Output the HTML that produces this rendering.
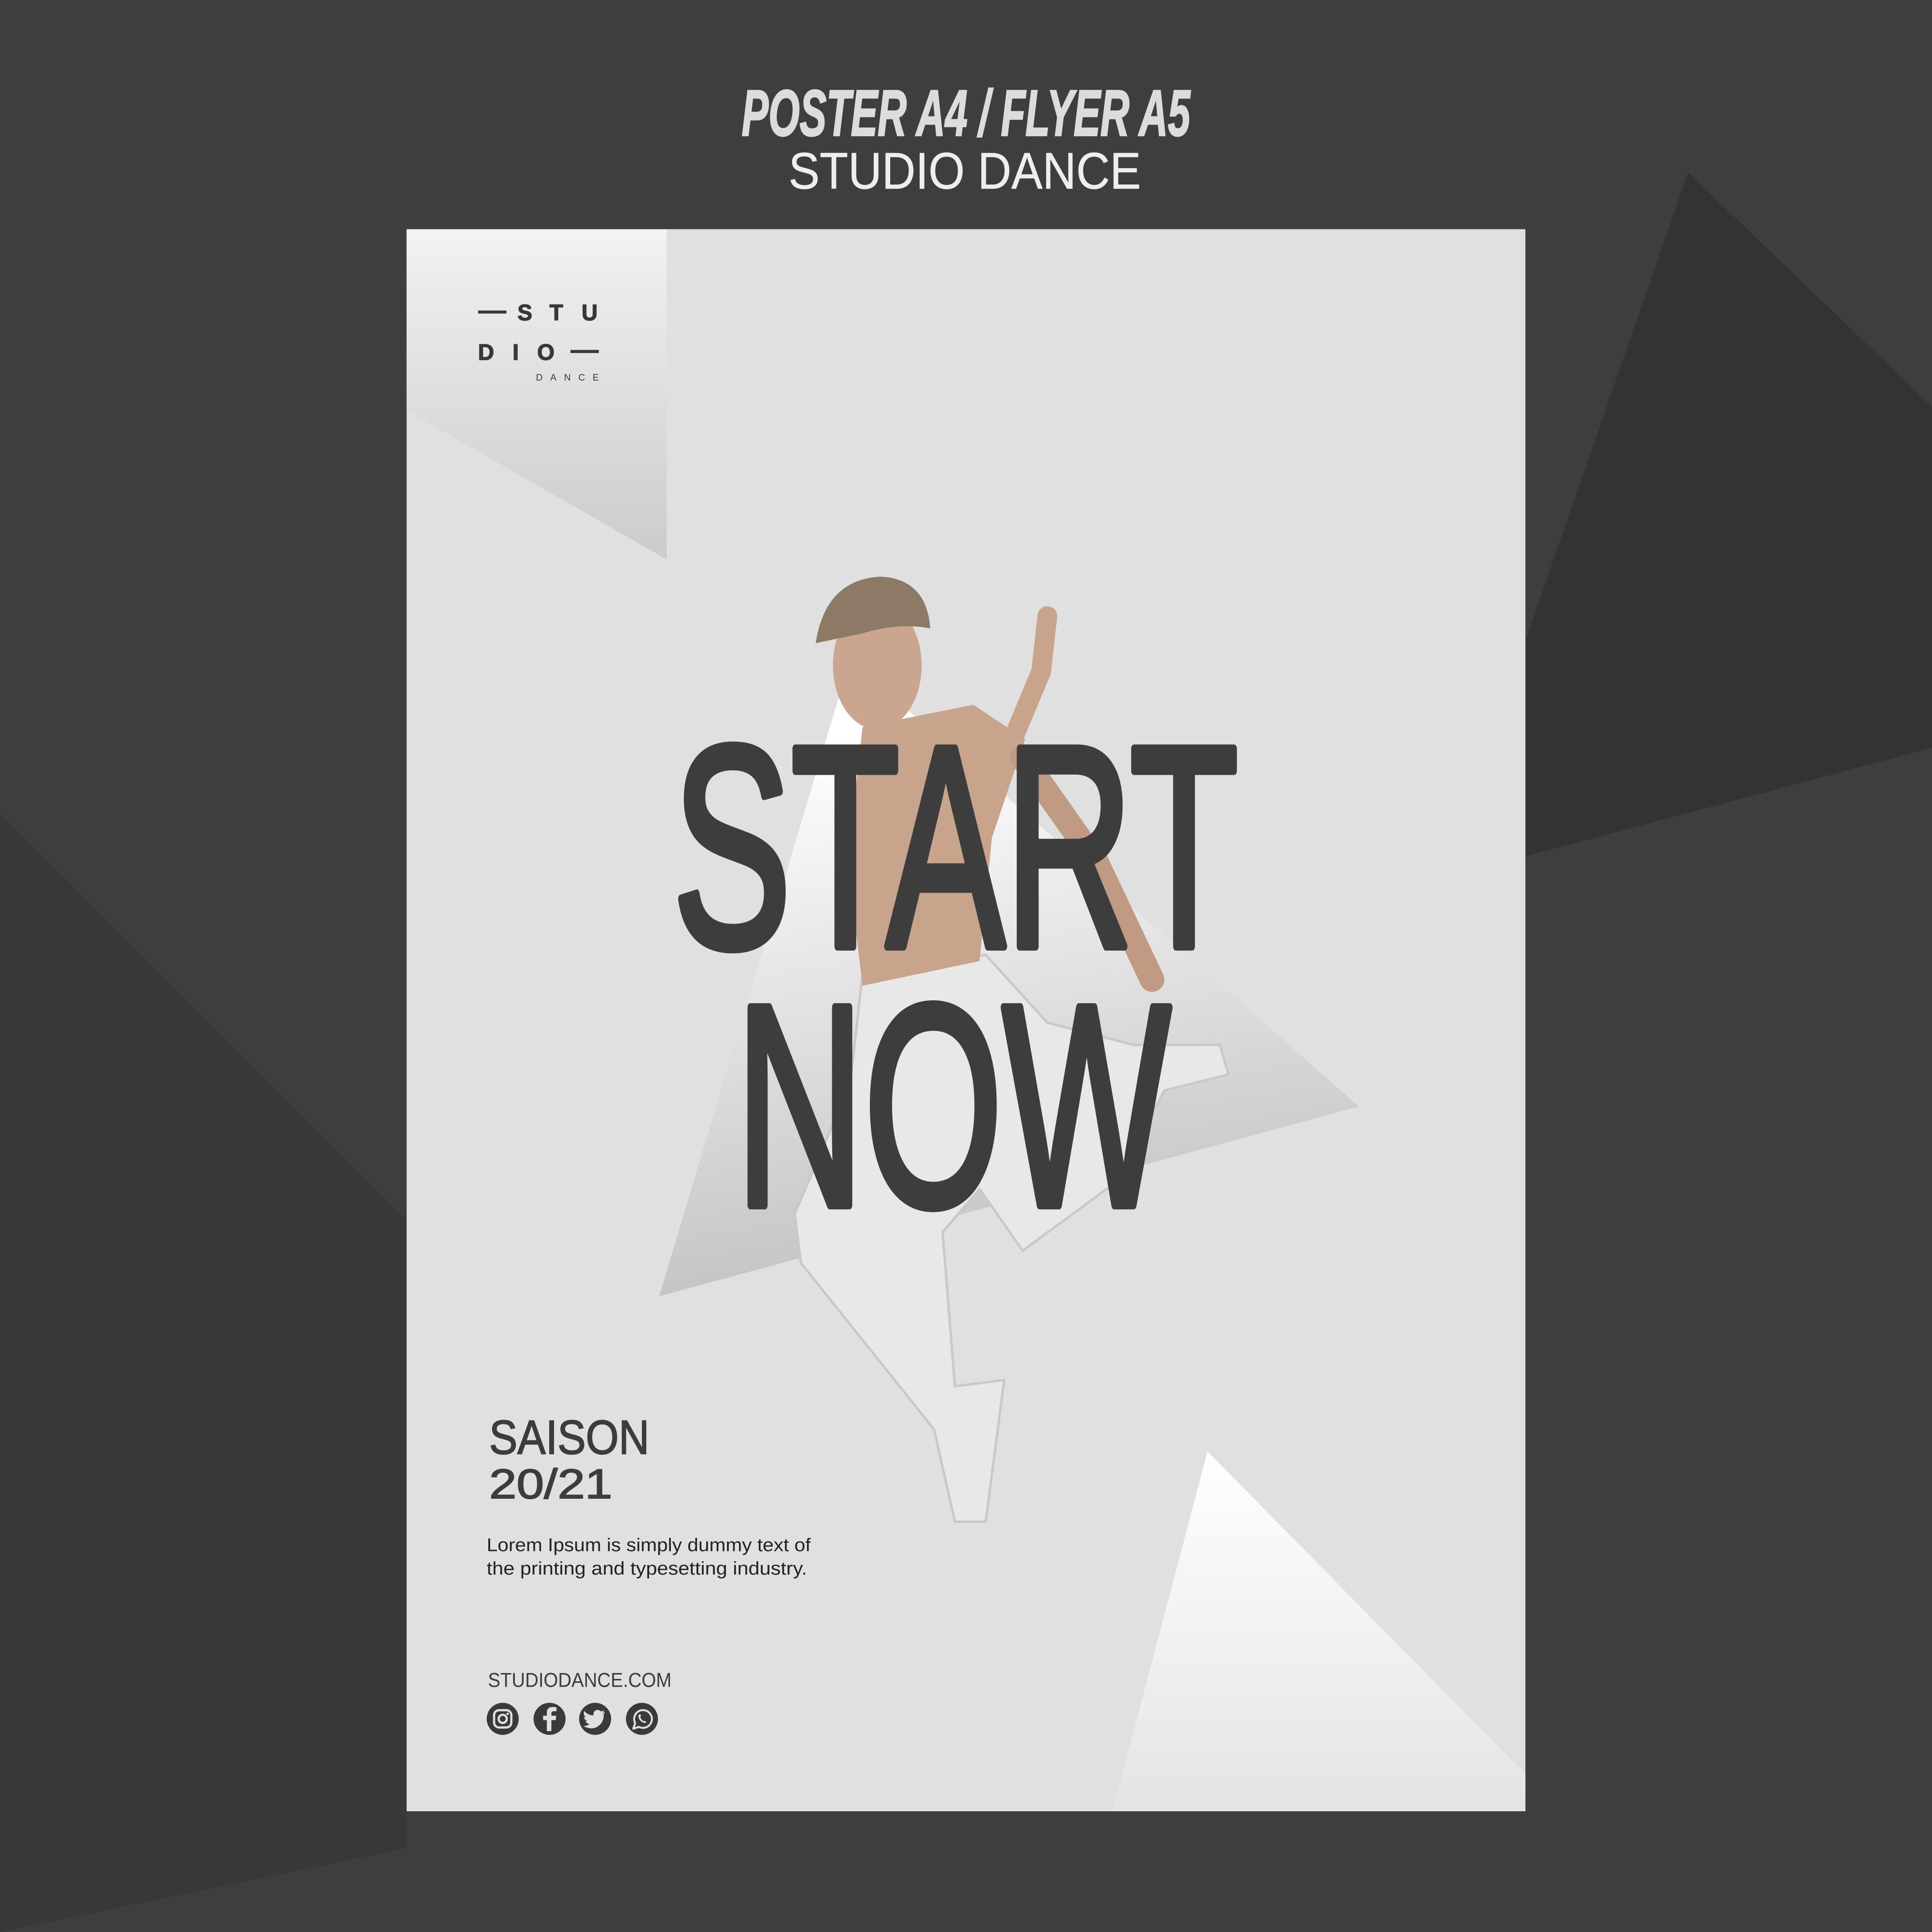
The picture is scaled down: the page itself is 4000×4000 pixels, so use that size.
<!DOCTYPE html>
<html><head><meta charset="utf-8"><style>
html,body{margin:0;padding:0;background:#3e3e3e;}
svg{display:block;}
</style></head><body>
<svg xmlns="http://www.w3.org/2000/svg" width="4000" height="4000" viewBox="0 0 1568 1568">
<defs>
<linearGradient id="gp" x1="0" y1="0" x2="0" y2="1"><stop offset="0" stop-color="#f2f2f2"/><stop offset="1" stop-color="#cbcbcd"/></linearGradient>
<linearGradient id="gc" x1="660" y1="600" x2="720" y2="1020" gradientUnits="userSpaceOnUse"><stop offset="0" stop-color="#ffffff"/><stop offset="1" stop-color="#c6c6c8"/></linearGradient>
<linearGradient id="gb" x1="0" y1="0" x2="0" y2="1"><stop offset="0" stop-color="#ffffff"/><stop offset="1" stop-color="#e4e4e4"/></linearGradient>
</defs>
<rect width="1568" height="1568" fill="#3e3e3e"/>
<polygon points="1238,695 1568,607 1568,330 1370,140 1238,520" fill="#333333"/>
<polygon points="0,660 330,990 330,1500 0,1568" fill="#383838"/>

<g font-family="'Liberation Sans Narrow','Liberation Sans',sans-serif" font-weight="bold" font-style="italic" font-size="53" fill="#dcdcdc" stroke="#dcdcdc" stroke-width="1.2">
<text x="602" y="110" textLength="364" lengthAdjust="spacingAndGlyphs">POSTER A4 / FLYER A5</text>
</g>
<text x="640" y="153" font-family="'Liberation Sans',sans-serif" font-size="42" fill="#eeeeee" stroke="#eeeeee" stroke-width="0.3" textLength="286" lengthAdjust="spacingAndGlyphs">STUDIO DANCE</text>

<rect x="330" y="186" width="908" height="1284" fill="#e0e0e0"/>
<polygon points="330,186 541,186 541,454 330,333" fill="url(#gp)"/>
<polygon points="690,535 1103,898 535,1052" fill="url(#gc)"/>
<polygon points="980,1178 1238,1440 1238,1470 903,1470" fill="url(#gb)"/>

<g fill="#383838" stroke="#383838" stroke-width="0.6" font-family="'Liberation Sans',sans-serif" font-weight="bold" font-size="18">
<rect x="388" y="252" width="23" height="2.5" stroke="none"/>
<text x="420" y="260">S</text><text x="446" y="260">T</text><text x="472" y="260">U</text>
<text x="388" y="292">D</text><text x="416" y="292">I</text><text x="436" y="292">O</text>
<rect x="463" y="284" width="23" height="2.5" stroke="none"/>
</g>
<text x="435" y="309" font-family="'Liberation Sans',sans-serif" font-size="7.5" fill="#383838" textLength="51" lengthAdjust="spacing">DANCE</text>

<!-- dancer (approximation) -->
<g>
<path d="M700,790 L800,775 L850,830 L920,848 L990,848 L997,872 L945,885 L905,960 L830,1015 L795,965 L765,1000 L775,1125 L815,1120 L800,1235 L775,1235 L758,1160 L650,1025 L645,985 L690,880 Z" fill="#e8e8e8" stroke="#c9c9c9" stroke-width="2"/>
<path d="M700,590 L790,572 L832,600 L805,680 L795,780 L700,800 L688,700 Z" fill="#c9a48c"/>
<path d="M822,600 L845,545 L850,500" stroke="#c9a48c" stroke-width="16" fill="none" stroke-linecap="round"/>
<path d="M830,615 L890,700 L935,795" stroke="#c09a82" stroke-width="20" fill="none" stroke-linecap="round"/>
<ellipse cx="712" cy="540" rx="36" ry="52" fill="#caa58f"/>
<path d="M662,522 Q670,470 715,468 Q752,470 755,510 Q730,505 700,514 Z" fill="#8c7a66"/>
</g>

<g font-family="'Liberation Sans Narrow','Liberation Sans',sans-serif" font-size="233" fill="#3d3d3d" stroke="#3d3d3d" stroke-width="7" stroke-linejoin="round">
<text x="546" y="768" textLength="459" lengthAdjust="spacingAndGlyphs">START</text>
<text x="597" y="978" textLength="353" lengthAdjust="spacingAndGlyphs">NOW</text>
</g>

<g fill="#3c3c3c" font-family="'Liberation Sans',sans-serif">
<text x="397" y="1180" font-size="39" stroke="#3c3c3c" stroke-width="0.8" textLength="130" lengthAdjust="spacingAndGlyphs">SAISON</text>
<text x="397" y="1216" font-size="34" stroke="#3c3c3c" stroke-width="0.8" textLength="100" lengthAdjust="spacingAndGlyphs">20/21</text>
<text x="395" y="1259" font-size="15" fill="#222" textLength="263" lengthAdjust="spacingAndGlyphs">Lorem Ipsum is simply dummy text of</text>
<text x="395" y="1278" font-size="15" fill="#222" textLength="260" lengthAdjust="spacingAndGlyphs">the printing and typesetting industry.</text>
<text x="396" y="1369" font-size="16.5" textLength="149" lengthAdjust="spacingAndGlyphs">STUDIODANCE.COM</text>
</g>

<g>
<circle cx="408" cy="1395" r="13" fill="#3a3a3a"/>
<rect x="401" y="1388" width="14" height="14" rx="4" fill="none" stroke="#e0e0e0" stroke-width="1.8"/>
<circle cx="408" cy="1395" r="3.3" fill="none" stroke="#e0e0e0" stroke-width="1.8"/>
<circle cx="412" cy="1391" r="1" fill="#e0e0e0"/>
<circle cx="446" cy="1395" r="13" fill="#3a3a3a"/>
<path d="M447.5,1405 V1396 H451 L451.5,1392.5 H447.5 V1390.5 Q447.5,1388.8 449.5,1388.8 H451.6 V1385.6 Q450,1385.4 448.6,1385.4 Q443.8,1385.4 443.8,1390 V1392.5 H440.8 V1396 H443.8 V1405 Z" fill="#e0e0e0"/>
<circle cx="483" cy="1395" r="13" fill="#3a3a3a"/>
<path d="M491,1389.5 Q489.8,1390 488.6,1390.2 Q489.9,1389.4 490.3,1388 Q489.1,1388.7 487.8,1389 Q486.6,1387.8 485,1387.8 Q481.8,1387.9 481.6,1391.4 Q481.6,1391.9 481.7,1392.3 Q477,1392 474.2,1388.6 Q472.9,1391.7 475.6,1393.6 Q474.7,1393.6 474,1393.2 Q474.1,1396 476.8,1396.7 Q476,1396.9 475.2,1396.8 Q476,1399 478.4,1399.2 Q476.2,1401 473.3,1400.8 Q482,1405.4 487.6,1399 Q490.3,1395.7 489.9,1391.2 Q490.6,1390.5 491,1389.5 Z" fill="#e0e0e0"/>
<circle cx="521" cy="1395" r="13" fill="#3a3a3a"/>
<path d="M514,1403 L515.5,1398.5 A7.2,7.2 0 1 1 518.5,1401.5 Z" fill="none" stroke="#e0e0e0" stroke-width="1.6" stroke-linejoin="round"/>
<path d="M518.3,1391.8 Q517.6,1394.6 520.5,1397.2 Q523,1399 524.5,1398 L523.7,1396.6 L522.4,1397 Q520.5,1395.8 519.6,1393.6 L520.4,1392.6 L519.5,1391.3 Z" fill="#e0e0e0"/>
</g>
</svg>
</body></html>
